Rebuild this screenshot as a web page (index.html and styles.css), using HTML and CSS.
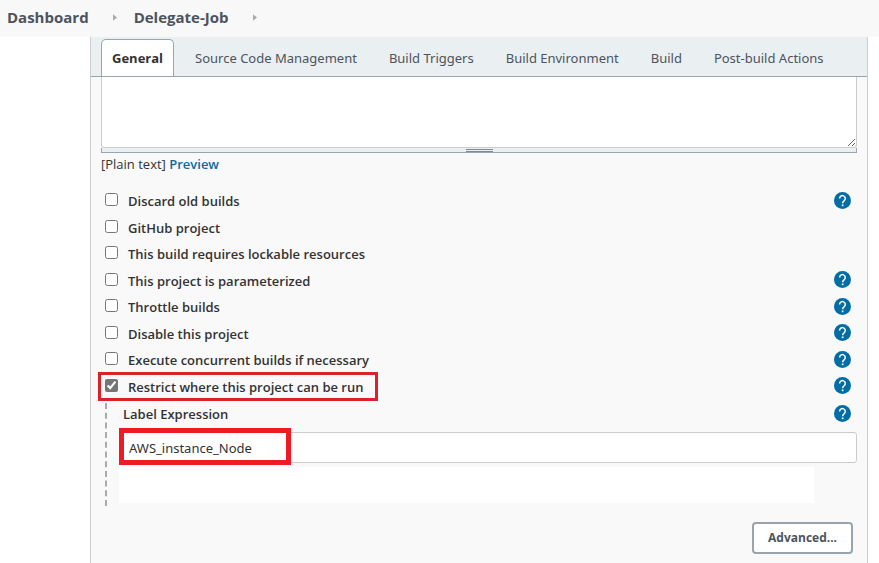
FILE: index.html
```html
<!DOCTYPE html>
<html lang="en">
<head>
<meta charset="utf-8">
<title>Delegate-Job Config</title>
<link rel="stylesheet" href="styles.css">
</head>
<body>
<svg class="defs" width="0" height="0" aria-hidden="true">
  <symbol id="help" viewBox="0 0 24 24">
    <circle cx="12" cy="12" r="12" fill="#006da4"/>
    <path d="M7.9 9.2a4 4 0 1 1 6.8 2.8c-1.5 1.3-2.6 1.9-2.6 3.8" fill="none" stroke="#fff" stroke-width="2.1"/>
    <rect x="11" y="17.6" width="2.4" height="2.4" fill="#fff"/>
  </symbol>
</svg>
<nav class="crumbs" aria-label="Breadcrumb">
  <a href="#">Dashboard</a>
  <svg class="arrow" viewBox="0 0 5 8" aria-hidden="true"><path d="M0 0L5 4L0 8Z"/></svg>
  <a href="#">Delegate-Job</a>
  <svg class="arrow" viewBox="0 0 5 8" aria-hidden="true"><path d="M0 0L5 4L0 8Z"/></svg>
</nav>
<main class="panel">
  <nav class="tabs" aria-label="Sections">
    <a class="tab active" href="#">General</a>
    <a class="tab" href="#">Source Code Management</a>
    <a class="tab" href="#">Build Triggers</a>
    <a class="tab" href="#">Build Environment</a>
    <a class="tab" href="#">Build</a>
    <a class="tab" href="#">Post-build Actions</a>
  </nav>
  <form class="form">
    <textarea class="description" aria-label="Description"></textarea>
    <div class="grip"><span></span></div>
    <p class="format">[Plain text] <a href="#">Preview</a></p>
    <div class="options">
      <div class="row"><label><input type="checkbox">Discard old builds</label><button type="button" class="help" aria-label="Help"><svg><use href="#help"/></svg></button></div>
      <div class="row"><label><input type="checkbox">GitHub project</label></div>
      <div class="row"><label><input type="checkbox">This build requires lockable resources</label></div>
      <div class="row"><label><input type="checkbox">This project is parameterized</label><button type="button" class="help" aria-label="Help"><svg><use href="#help"/></svg></button></div>
      <div class="row"><label><input type="checkbox">Throttle builds</label><button type="button" class="help" aria-label="Help"><svg><use href="#help"/></svg></button></div>
      <div class="row"><label><input type="checkbox">Disable this project</label><button type="button" class="help" aria-label="Help"><svg><use href="#help"/></svg></button></div>
      <div class="row"><label><input type="checkbox">Execute concurrent builds if necessary</label><button type="button" class="help" aria-label="Help"><svg><use href="#help"/></svg></button></div>
      <div class="row marked"><label><input type="checkbox" checked>Restrict where this project can be run</label><button type="button" class="help" aria-label="Help"><svg><use href="#help"/></svg></button></div>
    </div>
    <div class="nested">
      <div class="row"><label for="expr">Label Expression</label><button type="button" class="help" aria-label="Help"><svg><use href="#help"/></svg></button></div>
      <div class="field"><input id="expr" type="text" value="AWS_instance_Node"></div>
      <div class="message"></div>
    </div>
    <div class="actions"><button type="button" class="advanced">Advanced...</button></div>
  </form>
</main>
</body>
</html>
```
FILE: styles.css
```css
*, *::before, *::after { box-sizing: border-box; }
body {
  margin: 0;
  min-height: 100vh;
  display: flex;
  flex-direction: column;
  background: #fff;
  color: #333;
  font: 13px/20px "Open Sans", "Noto Sans", sans-serif;
}
a { text-decoration: none; }
.defs { position: absolute; }

.crumbs {
  display: flex;
  align-items: center;
  height: 37px;
  padding: 0 7px 3px;
  background: #f8f8f8;
  font-size: 15px;
  font-weight: 700;
}
.crumbs a { color: #4d545d; }
.arrow { width: 4px; height: 7px; margin: 0 17px 0 24px; fill: #aaa; }

.panel {
  flex: 1;
  margin: 0 11px 0 90px;
  border: solid #ccc;
  border-width: 0 1px;
  background: #f9f9f9;
}
.tabs {
  display: flex;
  gap: 10px;
  height: 40px;
  padding: 2px 10px 0;
  background: #eaeff2;
  border-bottom: 1px solid #98a5ae;
  font-family: "Noto Sans", "Open Sans", sans-serif;
}
.tab {
  padding: 9px 11px;
  color: #4d545d;
  white-space: nowrap;
}
.tab.active {
  padding: 8px 10px;
  border: 1px solid #98a5ae;
  border-bottom: 0;
  border-radius: 5px 5px 0 0;
  background: #fff;
  color: #333;
  font-family: "Open Sans", "Noto Sans", sans-serif;
  font-weight: 700;
}

.form { padding: 0 10px 10px; }
.description {
  display: block;
  width: 100%;
  height: 71px;
  border: 1px solid #ccc;
  border-top: 0;
  border-radius: 0 0 3px 3px;
  background: #fff;
  resize: vertical;
  outline: 0;
}
.grip {
  display: flex;
  justify-content: center;
  height: 5px;
  background: #eaeff2;
  border: 1px solid #98a5ae;
  border-top: 0;
}
.grip span {
  width: 27px;
  height: 3px;
  margin-top: 1px;
  border: solid #808a8f;
  border-width: 1px 0;
}
.format { margin: 1px 0 13px; }
.format a { color: #0b6aa2; font-weight: 600; }

.row {
  position: relative;
  display: flex;
  justify-content: space-between;
  align-items: center;
  height: 27px;
  padding: 0 6px 1px 0;
  font-weight: 600;
}
.row:nth-child(even) { height: 26px; }
.row label { display: flex; align-items: center; padding-top: 2px; }
.row input {
  width: 13px;
  height: 13px;
  margin: 0 10px 3px 4px;
  accent-color: #767676;
}
.help {
  display: flex;
  padding: 0;
  border: 0;
  background: none;
}
.help svg { width: 17px; height: 17px; }
.marked label::after {
  content: "";
  position: absolute;
  top: -1px;
  left: -3px;
  width: 280px;
  height: 29px;
  border: 3px solid #d8232a;
}

.nested { position: relative; margin-top: 1px; padding-left: 18px; }
.nested::before {
  content: "";
  position: absolute;
  top: 3px;
  bottom: -3px;
  left: 4px;
  border-left: 2px dashed #aaa;
}
.nested .row label { padding-left: 4px; }
.field { position: relative; margin-top: 5px; }
.field input {
  display: block;
  width: 100%;
  height: 31px;
  padding: 0 9px;
  border: 1px solid #ccc;
  border-radius: 3px;
  background: #fff;
  color: #333;
  font: 13px/20px "Noto Sans", "Open Sans", sans-serif;
}
.field::after {
  content: "";
  position: absolute;
  top: -4px;
  left: 0;
  width: 172px;
  height: 37px;
  border: 5px solid #ed1c24;
  pointer-events: none;
}
.message { height: 36px; margin: 4px 43px 0 0; background: #fff; }

.actions { display: flex; justify-content: flex-end; padding: 19px 4px 0 0; }
.advanced {
  height: 32px;
  padding: 0 14px;
  border: 2px solid #98a5ae;
  border-radius: 4px;
  background: #fff;
  color: #4d545d;
  font: 700 12px/20px "Open Sans", "Noto Sans", sans-serif;
}
```
